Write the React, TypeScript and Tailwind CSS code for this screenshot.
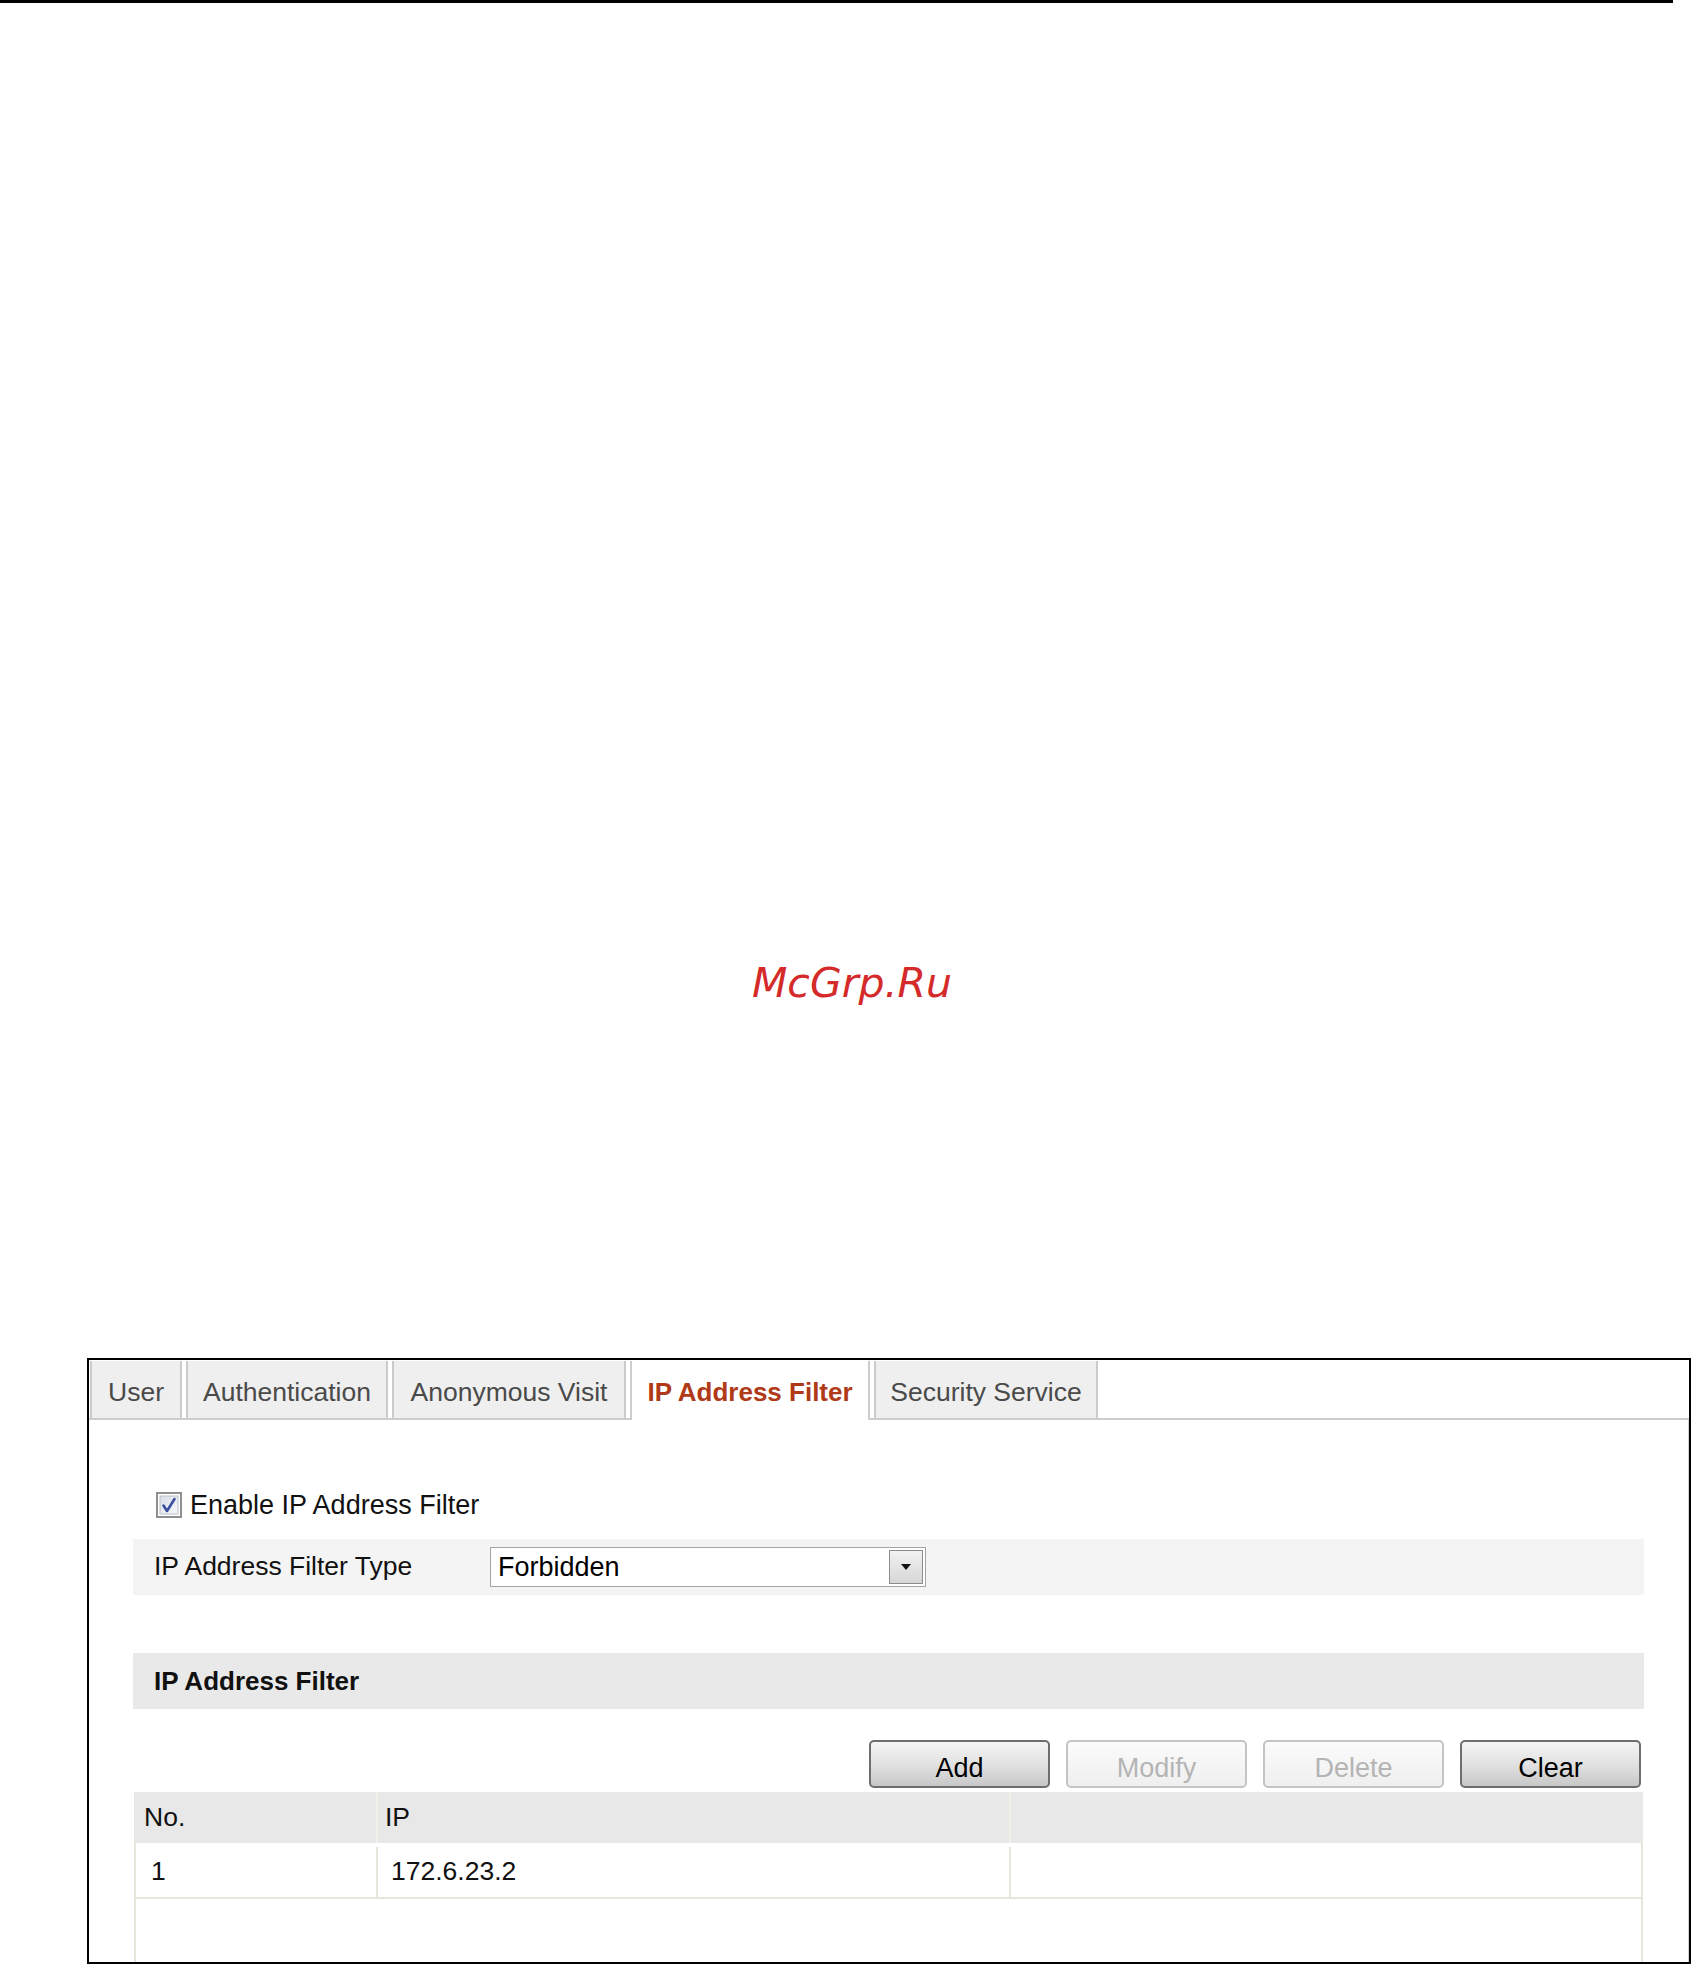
const uiFont = { fontFamily: '"Liberation Sans", Arial, sans-serif' };

const tabs = [
  { label: "User", w: "w-[92px]" },
  { label: "Authentication", w: "w-[202px]" },
  { label: "Anonymous Visit", w: "w-[234px]" },
  { label: "IP Address Filter", w: "w-[240px]", active: true },
  { label: "Security Service", w: "w-[224px]" },
];

function CheckBox() {
  return (
    <svg width="26" height="26" viewBox="0 0 26 26" className="shrink-0">
      <defs>
        <linearGradient id="cbg" x1="0" y1="0" x2="1" y2="1">
          <stop offset="0" stopColor="#d9dee6" />
          <stop offset="1" stopColor="#f7f8fa" />
        </linearGradient>
      </defs>
      <rect x="1" y="1" width="24" height="24" fill="#fff" stroke="#8e8f8f" strokeWidth="2" />
      <rect x="4" y="4" width="18" height="18" fill="url(#cbg)" stroke="#b9c0c9" strokeWidth="1" />
      <path d="M7.5 13.5 L11 19 L18.5 7" fill="none" stroke="#3b4fa0" strokeWidth="2.6" strokeLinecap="round" strokeLinejoin="round" />
    </svg>
  );
}

function ActionButton({ label, disabled }: { label: string; disabled?: boolean }) {
  return (
    <div
      className={
        disabled
          ? "w-[181px] h-[48px] flex items-center justify-center pt-[9px] rounded-[5px] border-2 border-[#c4c4c4] bg-gradient-to-b from-[#fbfbfb] to-[#efefef] text-[27px] text-[#b4b4b4]"
          : "w-[181px] h-[48px] flex items-center justify-center pt-[9px] rounded-[5px] border-2 border-[#6e6e6e] bg-gradient-to-b from-[#f4f4f4] via-[#e2e2e2] to-[#c8c8c8] text-[27px] text-black"
      }
    >
      {label}
    </div>
  );
}

export default function App() {
  return (
    <div className="w-[1693px] h-[1964px] bg-white overflow-hidden" style={uiFont}>
      <div className="h-[3px] w-[1673px] bg-black" />

      <div
        className="mt-[956px] pl-[752px] h-[48px] leading-[48px] text-[41px] italic text-[#d52a2a]"
        style={{ fontFamily: '"DejaVu Sans", sans-serif' }}
      >
        McGrp.Ru
      </div>

      <div className="mt-[351px] ml-[87px] w-[1604px] h-[606px] border-2 border-black flex flex-col">
        <div className="flex items-end gap-[4px] pt-[1px] pl-[1px] border-b-2 border-[#cdcdcd]">
          {tabs.map((t) =>
            t.active ? (
              <div
                key={t.label}
                className={`${t.w} h-[59px] -mb-[2px] bg-white border-x-2 border-[#cdcdcd] flex items-center justify-center pt-[3px] text-[26px] font-bold text-[#b03a17]`}
              >
                {t.label}
              </div>
            ) : (
              <div
                key={t.label}
                className={`${t.w} h-[57px] bg-[#efefef] border-x-2 border-[#cbcbcb] flex items-center justify-center pt-[6px] text-[26.5px] text-[#4a4a4a]`}
              >
                {t.label}
              </div>
            )
          )}
        </div>

        <div className="flex-1 flex flex-col pl-[44px] pr-[44px] border-r border-[#d4d4d4]">
          <div className="mt-[65px] h-[40px] flex items-center gap-[8px] pl-[23px] text-[27px] text-[#111]">
            <CheckBox />
            <span>Enable IP Address Filter</span>
          </div>

          <div className="mt-[14px] h-[56px] bg-[#f4f4f4] flex items-center pl-[21px] text-[26.5px] text-[#111]">
            <span className="w-[336px]">IP Address Filter Type</span>
            <div className="w-[436px] h-[40px] bg-white border border-[#a4a4a4] flex items-center">
              <span className="flex-1 pl-[7px] text-[27px] text-black">Forbidden</span>
              <div className="w-[34px] h-[34px] mr-[2px] border border-[#8c8c8c] bg-gradient-to-b from-[#f2f2f2] to-[#d6d6d6] flex items-center justify-center">
                <svg width="12" height="8" viewBox="0 0 12 8">
                  <path d="M1 1 H11 L6 7 Z" fill="#111" />
                </svg>
              </div>
            </div>
          </div>

          <div className="mt-[58px] h-[56px] bg-[#e9e9e9] flex items-center pl-[21px] text-[26px] font-bold text-[#111]">
            IP Address Filter
          </div>

          <div className="mt-[31px] flex justify-end gap-[16px] pr-[3px]">
            <ActionButton label="Add" />
            <ActionButton label="Modify" disabled />
            <ActionButton label="Delete" disabled />
            <ActionButton label="Clear" />
          </div>

          <div className="mt-[4px] flex-1 flex flex-col px-[1px]">
            <div className="h-[51px] bg-[#e8e8e8] flex text-[26.5px] text-[#111]">
              <div className="w-[244px] pl-[10px] flex items-center border-r-2 border-[#f1f0ea]">No.</div>
              <div className="w-[633px] pl-[7px] flex items-center border-r-2 border-[#f1f0ea]">IP</div>
              <div className="flex-1" />
            </div>
            <div className="flex-1 flex flex-col border-x-2 border-[#e8e6da]">
              <div className="h-[56px] flex border-b-2 border-[#e8e6da] bg-white pt-[4px] text-[26.5px] text-[#111]">
                <div className="w-[242px] pl-[15px] flex items-center border-r-2 border-[#e8e6da]">1</div>
                <div className="w-[633px] pl-[13px] flex items-center border-r-2 border-[#e8e6da]">172.6.23.2</div>
                <div className="flex-1" />
              </div>
            </div>
          </div>
        </div>
      </div>
    </div>
  );
}
